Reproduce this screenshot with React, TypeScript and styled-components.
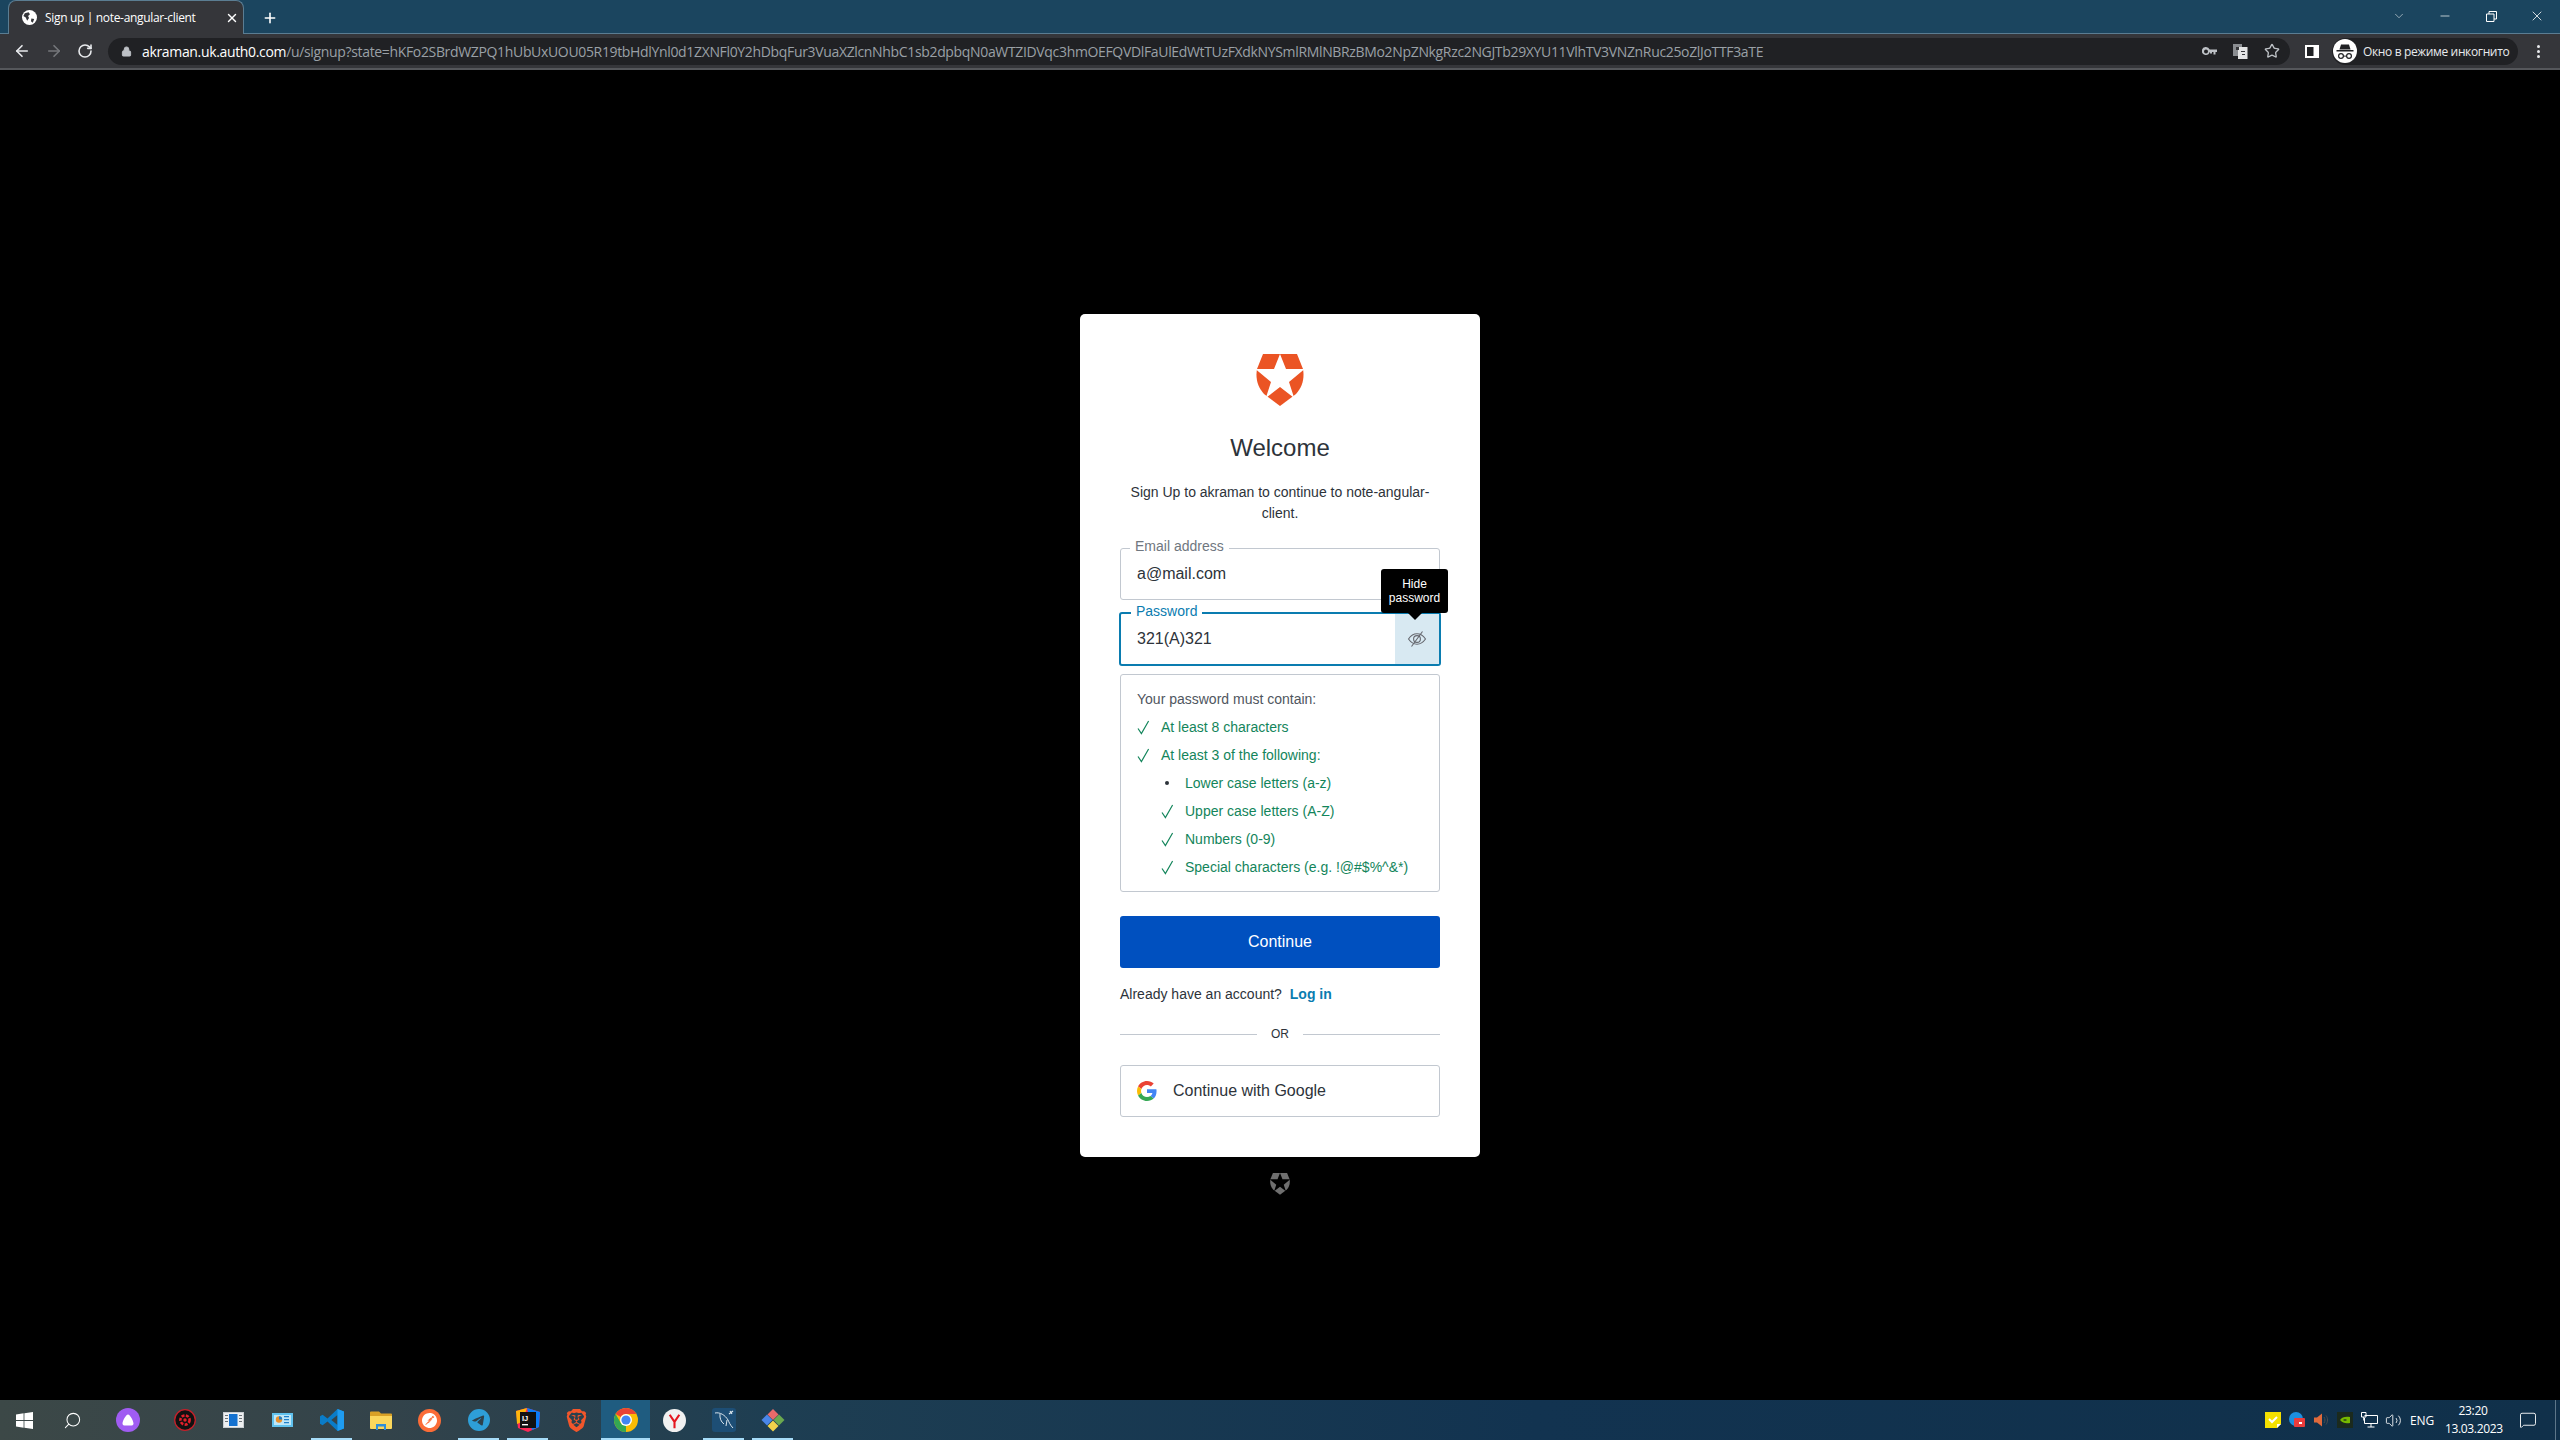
import React from 'react';
import styled, { createGlobalStyle } from 'styled-components';
import { ArrowLeft, ArrowRight, RotateCw, Lock, Star, X, Plus, ChevronDown, Minus, Search, Volume2, MessageSquare } from 'lucide-react';
import { SiBrave, SiPostman, SiTelegram } from 'react-icons/si';

const URL_HOST = 'akraman.uk.auth0.com';
const URL_PATH =
  '/u/signup?state=hKFo2SBrdWZPQ1hUbUxUOU05R19tbHdlYnl0d1ZXNFl0Y2hDbqFur3VuaXZlcnNhbC1sb2dpbqN0aWTZIDVqc3hmOEFQVDlFaUlEdWtTUzFXdkNYSmlRMlNBRzBMo2NpZNkgRzc2NGJTb29XYU11VlhTV3VNZnRuc25oZlJoTTF3aTE';

const GlobalStyle = createGlobalStyle`
  html, body {
    margin: 0;
    padding: 0;
    background: #000;
  }
  * {
    box-sizing: border-box;
  }
`;

const Page = styled.div`
  width: 2560px;
  height: 1440px;
  display: flex;
  flex-direction: column;
  overflow: hidden;
  background: #000;
  font-family: 'Liberation Sans', Arial, sans-serif;
`;

/* browser chrome */

const TabStrip = styled.div`
  height: 34px;
  flex: none;
  display: flex;
  align-items: flex-end;
  padding-left: 8px;
  background: #1b455f;
  border-bottom: 1px solid #5b7d92;
  color: #fff;
  font-family: 'Open Sans', sans-serif;
`;

const Tab = styled.div`
  width: 236px;
  height: 34px;
  margin-bottom: -1px;
  display: flex;
  align-items: center;
  padding: 0 4px 0 13px;
  background: #35363a;
  border: 1px solid #5b7d92;
  border-bottom: none;
  border-radius: 8px 8px 0 0;
`;

const TabTitle = styled.span`
  flex: 1;
  margin-left: 8px;
  font-size: 12px;
  letter-spacing: -0.33px;
  white-space: nowrap;
`;

const NewTab = styled.div`
  margin: 0 0 7px 18px;
  display: flex;
`;

const WindowControls = styled.div`
  margin: 0 0 9px auto;
  display: flex;
  align-items: center;
`;

const WindowControl = styled.div`
  width: 46px;
  display: flex;
  justify-content: center;
`;

const Toolbar = styled.div`
  height: 36px;
  flex: none;
  display: flex;
  align-items: center;
  padding-left: 13px;
  background: #35363a;
  border-bottom: 2px solid #55575b;
`;

const NavButtons = styled.div`
  display: flex;
  align-items: center;
  gap: 14px;
  width: 95px;
`;

const Omnibox = styled.div`
  width: 2182px;
  height: 27px;
  flex: none;
  margin-right: 15px;
  display: flex;
  align-items: center;
  padding: 0 10px 0 13px;
  background: #202124;
  border-radius: 14px;
  font-family: 'Open Sans', sans-serif;
`;

const UrlText = styled.div`
  flex: 1;
  margin-left: 10px;
  font-size: 14px;
  letter-spacing: -0.34px;
  white-space: nowrap;
  overflow: hidden;
  color: #9aa0a6;
`;

const UrlHost = styled.span`
  color: #fff;
`;

const OmniIcons = styled.div`
  display: flex;
  align-items: center;
  gap: 16px;
`;

const IncognitoPill = styled.div`
  width: 186px;
  height: 27px;
  flex: none;
  margin-left: 13px;
  display: flex;
  align-items: center;
  gap: 6px;
  padding-left: 1px;
  border-radius: 14px;
  background: #202124;
  color: #e8eaed;
  font-family: 'Open Sans', sans-serif;
  font-size: 12px;
  letter-spacing: -0.36px;
  white-space: nowrap;
`;

const Avatar = styled.div`
  width: 24px;
  height: 24px;
  flex: none;
  display: flex;
  align-items: center;
  justify-content: center;
  border-radius: 50%;
  background: #fff;
`;

const Kebab = styled.div`
  margin-left: 19px;
  display: flex;
  flex-direction: column;
  gap: 2px;
`;

const KebabDot = styled.span`
  width: 3px;
  height: 3px;
  border-radius: 50%;
  background: #e8eaed;
`;

/* login card */

const Main = styled.main`
  flex: 1;
  min-height: 0;
  display: flex;
  flex-direction: column;
  align-items: center;
  padding-top: 244px;
`;

const Card = styled.section`
  width: 400px;
  height: 843px;
  flex: none;
  padding: 40px 40px 0;
  display: flex;
  flex-direction: column;
  background: #fff;
  border-radius: 5px;
  color: #2d333a;
`;

const LogoWrap = styled.div`
  height: 52px;
  display: flex;
  justify-content: center;
`;

const Title = styled.h1`
  margin: 28px 0 0;
  font-size: 24px;
  font-weight: 400;
  line-height: 28px;
  text-align: center;
  color: #2d333a;
`;

const Subtitle = styled.p`
  margin: 20px 0 0;
  font-size: 14px;
  line-height: 21px;
  text-align: center;
`;

const Field = styled.div<{ $focused?: boolean }>`
  position: relative;
  height: ${({ $focused }) => ($focused ? '54px' : '52px')};
  margin-top: ${({ $focused }) => ($focused ? '12px' : '24px')};
  margin-inline: ${({ $focused }) => ($focused ? '-1px' : '0')};
  display: flex;
  align-items: stretch;
  border: ${({ $focused }) => ($focused ? '2px solid #0a7cb0' : '1px solid #c2c8d0')};
  border-radius: 3px;
`;

const FieldLabel = styled.label<{ $focused?: boolean }>`
  position: absolute;
  top: -11px;
  left: ${({ $focused }) => ($focused ? '10px' : '9px')};
  padding: 0 5px;
  background: #fff;
  font-size: 14px;
  line-height: 16px;
  color: ${({ $focused }) => ($focused ? '#0a7cb0' : '#6f7780')};
`;

const FieldValue = styled.div`
  flex: 1;
  display: flex;
  align-items: center;
  padding-left: 16px;
  font-size: 16px;
  color: #2d333a;
`;

const EyeButton = styled.div`
  width: 44px;
  display: flex;
  align-items: center;
  justify-content: center;
  background: #d8e9f2;
`;

const Tooltip = styled.div`
  position: absolute;
  top: -45px;
  right: -9px;
  width: 67px;
  height: 44px;
  display: flex;
  align-items: center;
  justify-content: center;
  background: #000;
  border-radius: 3px;
  color: #fff;
  font-size: 12px;
  line-height: 14px;
  text-align: center;

  &::after {
    content: '';
    position: absolute;
    top: 100%;
    left: 50%;
    margin-left: -7px;
    border: 7px solid transparent;
    border-bottom: none;
    border-top-color: #000;
  }
`;

const Checklist = styled.div`
  height: 218px;
  margin-top: 8px;
  padding: 10px 16px 0;
  border: 1px solid #c2c8d0;
  border-radius: 3px;
  font-size: 14px;
`;

const ChecklistTitle = styled.div`
  height: 28px;
  line-height: 28px;
  color: #4f5660;
`;

const Rule = styled.div<{ $nested?: boolean }>`
  height: 28px;
  display: flex;
  align-items: center;
  margin-left: ${({ $nested }) => ($nested ? '24px' : '0')};
  color: #13855b;
  white-space: nowrap;
`;

const RuleMark = styled.span`
  width: 24px;
  flex: none;
  display: flex;
  align-items: center;
`;

const Bullet = styled.span`
  width: 4px;
  height: 4px;
  margin-left: 4px;
  border-radius: 50%;
  background: #2d333a;
`;

const PrimaryButton = styled.button`
  height: 52px;
  margin-top: 24px;
  flex: none;
  border: none;
  border-radius: 3px;
  background: #0050bf;
  color: #fff;
  font-family: inherit;
  font-size: 16px;
`;

const LoginLine = styled.p`
  margin: 16px 0 0;
  font-size: 14px;
  line-height: 20px;
`;

const LoginLink = styled.a`
  margin-left: 4px;
  color: #0a7cb0;
  font-weight: 700;
  text-decoration: none;
`;

const Divider = styled.div`
  margin-top: 20px;
  display: flex;
  align-items: center;
  gap: 14px;
  font-size: 12px;
  line-height: 20px;

  &::before,
  &::after {
    content: '';
    flex: 1;
    height: 1px;
    background: #c2c8d0;
  }
`;

const SocialButton = styled.button`
  height: 52px;
  margin-top: 21px;
  flex: none;
  display: flex;
  align-items: center;
  gap: 16px;
  padding: 0 0 0 16px;
  border: 1px solid #c2c8d0;
  border-radius: 3px;
  background: #fff;
  color: #2d333a;
  font-family: inherit;
  font-size: 16px;
`;

const FooterMark = styled.div`
  margin-top: 16px;
  display: flex;
`;

/* windows taskbar */

const Taskbar = styled.footer`
  height: 40px;
  flex: none;
  display: flex;
  align-items: stretch;
  background: linear-gradient(90deg, #3c4847 0%, #33434a 15%, #1e3e52 30%, #123350 60%, #10304a 100%);
`;

const SystemItem = styled.div`
  width: 48px;
  flex: none;
  display: flex;
  align-items: center;
  justify-content: center;
`;

const TaskItem = styled.div<{ $open?: boolean; $active?: boolean; $gap?: number }>`
  position: relative;
  width: 49px;
  flex: none;
  margin-left: ${({ $gap }) => $gap ?? 0}px;
  display: flex;
  align-items: center;
  justify-content: center;
  background: ${({ $active }) => ($active ? '#1f5c80' : 'transparent')};

  &::after {
    content: '';
    display: ${({ $open }) => ($open ? 'block' : 'none')};
    position: absolute;
    left: ${({ $active }) => ($active ? '0' : '4px')};
    right: ${({ $active }) => ($active ? '0' : '4px')};
    bottom: 0;
    height: 2px;
    background: #a6dcf8;
  }
`;

const Tray = styled.div`
  margin-left: auto;
  display: flex;
  align-items: center;
  color: #fff;
  font-family: 'Open Sans', sans-serif;
`;

const TrayIcon = styled.div`
  width: 24px;
  display: flex;
  justify-content: center;
`;

const TrayLang = styled.div`
  margin-left: 2px;
  width: 30px;
  font-size: 12px;
  letter-spacing: -0.2px;
  text-align: center;
`;

const Clock = styled.div`
  width: 56px;
  margin-left: 8px;
  font-size: 12px;
  letter-spacing: -0.35px;
  line-height: 18px;
  text-align: center;
  white-space: nowrap;
`;

const NotifyArea = styled.div`
  width: 54px;
  display: flex;
  justify-content: center;
`;

const ShowDesktop = styled.div`
  width: 5px;
  align-self: stretch;
  border-left: 1px solid #5d7689;
`;

/* drawings */

const AuthLogo = ({ width, shield, star }: { width: number; shield: string; star: string }) => (
  <svg width={width} height={(width * 52) / 48} viewBox="0 0 48 52">
    <path d="M7 0H41L47 15C48.6 24 46.6 33 40 40L24 52L8 40C1.4 33-.6 24 1 15Z" fill={shield} />
    <path d="M24 0L30 15H48.5L33 28L38.2 44L24 33L9.8 44L15 28L-.5 15H18Z" fill={star} />
  </svg>
);

const GoogleIcon = () => (
  <svg width="20" height="20" viewBox="0 0 48 48">
    <path fill="#EA4335" d="M24 9.5c3.5 0 6.7 1.2 9.2 3.6l6.9-6.9C35.9 2.4 30.5 0 24 0 14.6 0 6.5 5.4 2.6 13.2l8 6.2C12.5 13.7 17.8 9.5 24 9.5z" />
    <path fill="#4285F4" d="M46.9 24.5c0-1.6-.1-3.1-.4-4.5H24v9h12.9c-.6 3-2.2 5.5-4.7 7.2l7.7 6c4.5-4.2 7-10.3 7-17.7z" />
    <path fill="#FBBC05" d="M10.5 28.6c-.5-1.4-.8-3-.8-4.6s.3-3.2.8-4.6l-8-6.2C.9 16.5 0 20.1 0 24s.9 7.5 2.6 10.8l7.9-6.2z" />
    <path fill="#34A853" d="M24 48c6.5 0 11.9-2.1 15.9-5.8l-7.7-6c-2.1 1.4-4.9 2.3-8.2 2.3-6.2 0-11.5-4.2-13.4-9.9l-8 6.2C6.5 42.6 14.6 48 24 48z" />
  </svg>
);

const EyeOff = () => (
  <svg width="20" height="18" viewBox="0 0 20 18" fill="none" stroke="#65676e" strokeWidth="1.1">
    <path d="M1.5 9C4 5.4 6.8 3.8 10 3.8S16 5.4 18.5 9C16 12.6 13.2 14.2 10 14.2S4 12.6 1.5 9Z" />
    <circle cx="10" cy="9" r="3.4" />
    <path d="M15.5 1.5L4.5 16.5" />
  </svg>
);

const Check = () => (
  <svg width="13" height="15" viewBox="0 0 13 15" fill="none" stroke="#13855b" strokeWidth="1.2">
    <path d="M1 8.5L4.4 13.5L11.6 1" />
  </svg>
);

const Globe = () => (
  <svg width="15" height="15" viewBox="0 0 16 16">
    <circle cx="8" cy="8" r="8" fill="#fff" />
    <path d="M3 3.5L7 2.5L8.5 4.5L6.5 6.5L7.5 8.5L5.5 11.5L4 8L1.5 6.5ZM10 9L13 9.5L11.5 13.5L9.5 12Z" fill="#35363a" />
  </svg>
);

const RestoreIcon = () => (
  <svg width="11" height="11" viewBox="0 0 11 11" fill="none" stroke="#fff">
    <path d="M.5 3H8V10.5H.5ZM3 3V.5H10.5V8H8" />
  </svg>
);

const KeyIcon = () => (
  <svg width="15" height="9" viewBox="0 0 15 9" fill="#bdc1c6">
    <path d="M4 0a4 4 0 0 1 3.7 2.5H15V5h-1.5v2.5h-2V5H10v1.5H8V5h-.3A4 4 0 1 1 4 0Zm0 2.5a2 2 0 1 0 0 4 2 2 0 0 0 0-4Z" fillRule="evenodd" />
  </svg>
);

const TranslateIcon = () => (
  <svg width="15" height="15" viewBox="0 0 15 15">
    <rect x="0" y="0" width="9" height="12" fill="#8a8d91" />
    <rect x="5" y="3" width="9.5" height="12" fill="#e4e5e6" />
    <path d="M3 3h3v3H3zM8 7h4v1H8zM9 10h3v1H9z" fill="#35363a" />
  </svg>
);

const SidePanelIcon = () => (
  <svg width="14" height="13" viewBox="0 0 14 13">
    <rect width="14" height="13" fill="#fff" />
    <rect x="2" y="2" width="6.5" height="9" fill="#202124" />
  </svg>
);

const IncognitoIcon = () => (
  <svg width="18" height="17" viewBox="0 0 18 17" fill="#202124">
    <path d="M5 1.5H13L14.5 6.5H3.5Z" />
    <rect x="0.5" y="7" width="17" height="1.5" />
    <circle cx="5" cy="13" r="2.4" fill="none" stroke="#202124" strokeWidth="1.2" />
    <circle cx="13" cy="13" r="2.4" fill="none" stroke="#202124" strokeWidth="1.2" />
    <path d="M7.4 12.6h3.2v1H7.4z" />
  </svg>
);

const WindowsIcon = () => (
  <svg width="17" height="17" viewBox="0 0 17 17" fill="#fff">
    <path d="M0 2.4L7.6 1.3V8H0ZM8.4 1.2L17 0V8H8.4ZM0 9H7.6V15.7L0 14.6ZM8.4 9H17V17L8.4 15.8Z" />
  </svg>
);

const AliceIcon = () => (
  <svg width="24" height="24" viewBox="0 0 24 24">
    <circle cx="12" cy="12" r="12" fill="#a05cf2" />
    <path d="M12 6.5C14 6.5 17.5 13 17.5 15.5S15 17.5 12 17.5 6.5 18 6.5 15.5 10 6.5 12 6.5Z" fill="#fff" />
  </svg>
);

const GearBadge = () => (
  <svg width="22" height="22" viewBox="0 0 22 22">
    <circle cx="11" cy="11" r="10.3" fill="#111" stroke="#c5202a" strokeWidth="1.3" />
    <circle cx="11" cy="11" r="4.6" fill="none" stroke="#e3202b" strokeWidth="2.6" strokeDasharray="3 1.4" />
    <circle cx="11" cy="11" r="1.7" fill="#e3202b" />
  </svg>
);

const WindowApp = () => (
  <svg width="21" height="16" viewBox="0 0 21 16">
    <rect width="21" height="16" fill="#c9ced2" />
    <rect x="1" y="1" width="19" height="14" fill="#eef0f1" />
    <rect x="6" y="2" width="8.5" height="12" fill="#1472d0" />
    <path d="M2 3h3v1H2zM2 6h3v1H2zM2 9h3v1H2zM16 3h3v1h-3zM16 6h3v1h-3zM16 9h3v1h-3z" fill="#6c7378" />
  </svg>
);

const ControlPanelApp = () => (
  <svg width="21" height="17" viewBox="0 0 21 17">
    <rect width="21" height="14" y="1" fill="#60c2ee" />
    <rect x="2" y="3" width="17" height="10" fill="#bfe7f8" />
    <circle cx="7" cy="7.5" r="3.2" fill="#e9902c" />
    <path d="M7 7.5V4.3A3.2 3.2 0 0 1 10.2 7.5Z" fill="#1f7fc9" />
    <path d="M12 4h5v1.3h-5zM12 7h5v1.3h-5zM12 10h5v1.3h-5z" fill="#1f7fc9" />
  </svg>
);

const VsCodeIcon = () => (
  <svg width="24" height="24" viewBox="0 0 24 24">
    <path d="M17.5 1L24 3.6V20.4L17.5 23L7.5 13.4L2.6 17.2L0 15.8V8.2L2.6 6.8L7.5 10.6ZM17.5 7L11.3 12L17.5 17Z" fill="#0a7cc8" fillRule="evenodd" />
    <path d="M17.5 1L24 3.6V20.4L17.5 23Z" fill="#1f9cf0" />
  </svg>
);

const FolderIcon = () => (
  <svg width="22" height="20" viewBox="0 0 22 20">
    <path d="M0 2.5A1 1 0 0 1 1 1.5H9L11 3.5H21A1 1 0 0 1 22 4.5V8H0Z" fill="#d9a126" />
    <path d="M0 6H22V18A1 1 0 0 1 21 19H1A1 1 0 0 1 0 18Z" fill="#fbd75c" />
    <path d="M6 14H16V20H14V16.5H8V20H6Z" fill="#2f8fd8" />
  </svg>
);

const RoundApp = styled.div<{ $bg: string }>`
  width: 23px;
  height: 23px;
  display: flex;
  align-items: center;
  justify-content: center;
  border-radius: 50%;
  background: ${({ $bg }) => $bg};
`;

const IntellijIcon = () => (
  <svg width="24" height="24" viewBox="0 0 24 24">
    <path d="M0 3L11 0L24 4L23 19L12 24L2 20Z" fill="#fe2857" />
    <path d="M11 0L24 4L23 19L16 22Z" fill="#087cfa" />
    <path d="M0 3L11 0L6 14L1 16Z" fill="#fdb60d" />
    <rect x="4" y="4" width="16" height="16" fill="#111" />
    <text x="6" y="12.5" fontSize="7.5" fontWeight="700" fill="#fff" fontFamily="'Liberation Sans', sans-serif">IJ</text>
    <rect x="6" y="16" width="6" height="1.4" fill="#fff" />
  </svg>
);

const ChromeIcon = () => (
  <svg width="24" height="24" viewBox="0 0 24 24">
    <circle cx="12" cy="12" r="12" fill="#fbbc05" />
    <path d="M12 0A12 12 0 0 1 22.4 6H12A6 6 0 0 0 6.8 9L1.6 6A12 12 0 0 1 12 0Z" fill="#ea4335" />
    <path d="M1.6 6L6.8 15A6 6 0 0 0 12 18L6.8 22.8A12 12 0 0 1 1.6 6Z M12 24A12 12 0 0 1 6 22.4L11.2 13.4H12Z" fill="#34a853" />
    <circle cx="12" cy="12" r="6" fill="#fff" />
    <circle cx="12" cy="12" r="4.6" fill="#4285f4" />
  </svg>
);

const YandexIcon = () => (
  <svg width="23" height="23" viewBox="0 0 24 24">
    <circle cx="12" cy="12" r="12" fill="#f1f1f1" />
    <path d="M7 6L12 13.5V20M17 6L12 13.5" fill="none" stroke="#e5161f" strokeWidth="2.2" />
  </svg>
);

const MysqlIcon = () => (
  <svg width="24" height="24" viewBox="0 0 24 24">
    <rect width="24" height="24" rx="3" fill="#1d4e75" />
    <path d="M3 5C8 4 13 7 16 12C17 14 18 17 21 20M8 6C7.5 10 9 14 12 16M15 12L14 18" fill="none" stroke="#dbe6ee" strokeWidth="1" />
    <path d="M17 6L21 3M18 3L20 6" fill="none" stroke="#dbe6ee" strokeWidth="1.2" />
  </svg>
);

const GitDiamond = () => (
  <svg width="24" height="24" viewBox="0 0 24 24">
    <path d="M6 6.5L0.5 12L6 17.5L11.5 12Z" fill="#4a86e8" />
    <path d="M12 1L17.5 6.5L12 12L6.5 6.5Z" fill="#e86a6a" />
    <path d="M18 6.5L23.5 12L18 17.5L12.5 12Z" fill="#6aa84f" />
    <path d="M12 12.5L17.5 18L12 23.5L6.5 18Z" fill="#f1d24b" />
  </svg>
);

const StickyNote = () => (
  <svg width="16" height="16" viewBox="0 0 16 16">
    <path d="M0 0H16V12L12 16H0Z" fill="#f5e100" />
    <path d="M12 16V12H16Z" fill="#fff" />
    <path d="M4 7L7 10L12 5" fill="none" stroke="#fff" strokeWidth="2" />
  </svg>
);

const AvBadge = () => (
  <svg width="16" height="16" viewBox="0 0 16 16">
    <circle cx="7" cy="7" r="7" fill="#1c8fe0" />
    <rect x="5" y="6" width="11" height="9" rx="1" fill="#ea3c3c" />
    <path d="M10 10h3v2h-3z" fill="#fff" />
  </svg>
);

const MutedSpeaker = () => (
  <svg width="16" height="16" viewBox="0 0 16 16">
    <path d="M1 5.5H4L9 1.5V14.5L4 10.5H1Z" fill="#e06a3c" />
    <path d="M11 5C12.3 6.7 12.3 9.3 11 11M13 3.5C15 6 15 10 13 12.5" fill="none" stroke="#4c4c4c" strokeWidth="1" />
  </svg>
);

const NvidiaBadge = () => (
  <svg width="16" height="16" viewBox="0 0 16 16">
    <rect width="16" height="16" fill="#1b2a1d" />
    <path d="M3 8C5 5 8 4.5 13 5V11C9 11.5 6 11.5 3 8Z" fill="#76b900" />
    <path d="M6 8C7 7 9 7 10 8C9 9 7 9 6 8Z" fill="#1b2a1d" />
  </svg>
);

const NetworkIcon = () => (
  <svg width="17" height="16" viewBox="0 0 17 16" fill="none" stroke="#fff">
    <path d="M3.5 3.5H16.5V11.5H3.5M3.5 6V11.5M10 11.5V15M6.5 15H13.5M.5 .5H5V5H.5ZM2.7 5V8.5" />
  </svg>
);

const TASK_APPS: { key: string; gap?: number; open?: boolean; active?: boolean; icon: React.ReactNode }[] = [
  { key: 'alice', gap: 7, icon: <AliceIcon /> },
  { key: 'gear', gap: 8, icon: <GearBadge /> },
  { key: 'window', icon: <WindowApp /> },
  { key: 'panel', icon: <ControlPanelApp /> },
  { key: 'vscode', open: true, icon: <VsCodeIcon /> },
  { key: 'folder', icon: <FolderIcon /> },
  { key: 'postman', icon: <RoundApp $bg="#fb6c37"><SiPostman size={15} color="#fff" /></RoundApp> },
  { key: 'telegram', open: true, icon: <SiTelegram size={22} color="#2e9fd8" /> },
  { key: 'intellij', open: true, icon: <IntellijIcon /> },
  { key: 'brave', icon: <SiBrave size={23} color="#f1562b" /> },
  { key: 'chrome', open: true, active: true, icon: <ChromeIcon /> },
  { key: 'yandex', icon: <YandexIcon /> },
  { key: 'mysql', open: true, icon: <MysqlIcon /> },
  { key: 'git', open: true, icon: <GitDiamond /> },
];

const RULES = [
  { text: 'At least 8 characters', ok: true },
  { text: 'At least 3 of the following:', ok: true },
  { text: 'Lower case letters (a-z)', ok: false, nested: true },
  { text: 'Upper case letters (A-Z)', ok: true, nested: true },
  { text: 'Numbers (0-9)', ok: true, nested: true },
  { text: 'Special characters (e.g. !@#$%^&*)', ok: true, nested: true },
];

const App: React.FC = () => (
  <Page>
    <GlobalStyle />
    <TabStrip>
      <Tab>
        <Globe />
        <TabTitle>Sign up | note-angular-client</TabTitle>
        <X size={14} color="#fff" strokeWidth={2.4} />
      </Tab>
      <NewTab>
        <Plus size={16} color="#fff" strokeWidth={2.4} />
      </NewTab>
      <WindowControls>
        <WindowControl><ChevronDown size={14} color="#c8d3da" strokeWidth={1.2} /></WindowControl>
        <WindowControl><Minus size={14} color="#fff" strokeWidth={1.2} /></WindowControl>
        <WindowControl><RestoreIcon /></WindowControl>
        <WindowControl><X size={16} color="#fff" strokeWidth={1.2} /></WindowControl>
      </WindowControls>
    </TabStrip>
    <Toolbar>
      <NavButtons>
        <ArrowLeft size={18} color="#e8eaed" strokeWidth={2.2} />
        <ArrowRight size={18} color="#75777b" strokeWidth={2.2} />
        <RotateCw size={16} color="#e8eaed" strokeWidth={2.4} />
      </NavButtons>
      <Omnibox>
        <Lock size={11} color="#bdc1c6" fill="#bdc1c6" />
        <UrlText>
          <UrlHost>{URL_HOST}</UrlHost>
          {URL_PATH}
        </UrlText>
        <OmniIcons>
          <KeyIcon />
          <TranslateIcon />
          <Star size={16} color="#bdc1c6" strokeWidth={2} />
        </OmniIcons>
      </Omnibox>
      <SidePanelIcon />
      <IncognitoPill>
        <Avatar>
          <IncognitoIcon />
        </Avatar>
        Окно в режиме инкогнито
      </IncognitoPill>
      <Kebab>
        <KebabDot />
        <KebabDot />
        <KebabDot />
      </Kebab>
    </Toolbar>
    <Main>
      <Card>
        <LogoWrap>
          <AuthLogo width={48} shield="#eb5424" star="#fff" />
        </LogoWrap>
        <Title>Welcome</Title>
        <Subtitle>Sign Up to akraman to continue to note-angular-client.</Subtitle>
        <Field>
          <FieldLabel>Email address</FieldLabel>
          <FieldValue>a@mail.com</FieldValue>
        </Field>
        <Field $focused>
          <FieldLabel $focused>Password</FieldLabel>
          <FieldValue>321(A)321</FieldValue>
          <EyeButton>
            <EyeOff />
          </EyeButton>
          <Tooltip>
            Hide
            <br />
            password
          </Tooltip>
        </Field>
        <Checklist>
          <ChecklistTitle>Your password must contain:</ChecklistTitle>
          {RULES.map((rule) => (
            <Rule key={rule.text} $nested={rule.nested}>
              <RuleMark>{rule.ok ? <Check /> : <Bullet />}</RuleMark>
              {rule.text}
            </Rule>
          ))}
        </Checklist>
        <PrimaryButton>Continue</PrimaryButton>
        <LoginLine>
          Already have an account? <LoginLink>Log in</LoginLink>
        </LoginLine>
        <Divider>OR</Divider>
        <SocialButton>
          <GoogleIcon />
          Continue with Google
        </SocialButton>
      </Card>
      <FooterMark>
        <AuthLogo width={20} shield="#6f6f6f" star="#000" />
      </FooterMark>
    </Main>
    <Taskbar>
      <SystemItem>
        <WindowsIcon />
      </SystemItem>
      <SystemItem>
        <Search size={19} color="#fff" strokeWidth={1.3} style={{ transform: 'scaleX(-1)' }} />
      </SystemItem>
      {TASK_APPS.map((app) => (
        <TaskItem key={app.key} $gap={app.gap} $open={app.open} $active={app.active}>
          {app.icon}
        </TaskItem>
      ))}
      <Tray>
        <TrayIcon><StickyNote /></TrayIcon>
        <TrayIcon><AvBadge /></TrayIcon>
        <TrayIcon><MutedSpeaker /></TrayIcon>
        <TrayIcon><NvidiaBadge /></TrayIcon>
        <TrayIcon><NetworkIcon /></TrayIcon>
        <TrayIcon><Volume2 size={17} color="#fff" strokeWidth={1.2} /></TrayIcon>
        <TrayLang>ENG</TrayLang>
        <Clock>
          23:20
          <br />
          13.03.2023
        </Clock>
        <NotifyArea>
          <MessageSquare size={18} color="#fff" strokeWidth={1.2} />
        </NotifyArea>
        <ShowDesktop />
      </Tray>
    </Taskbar>
  </Page>
);

export default App;
